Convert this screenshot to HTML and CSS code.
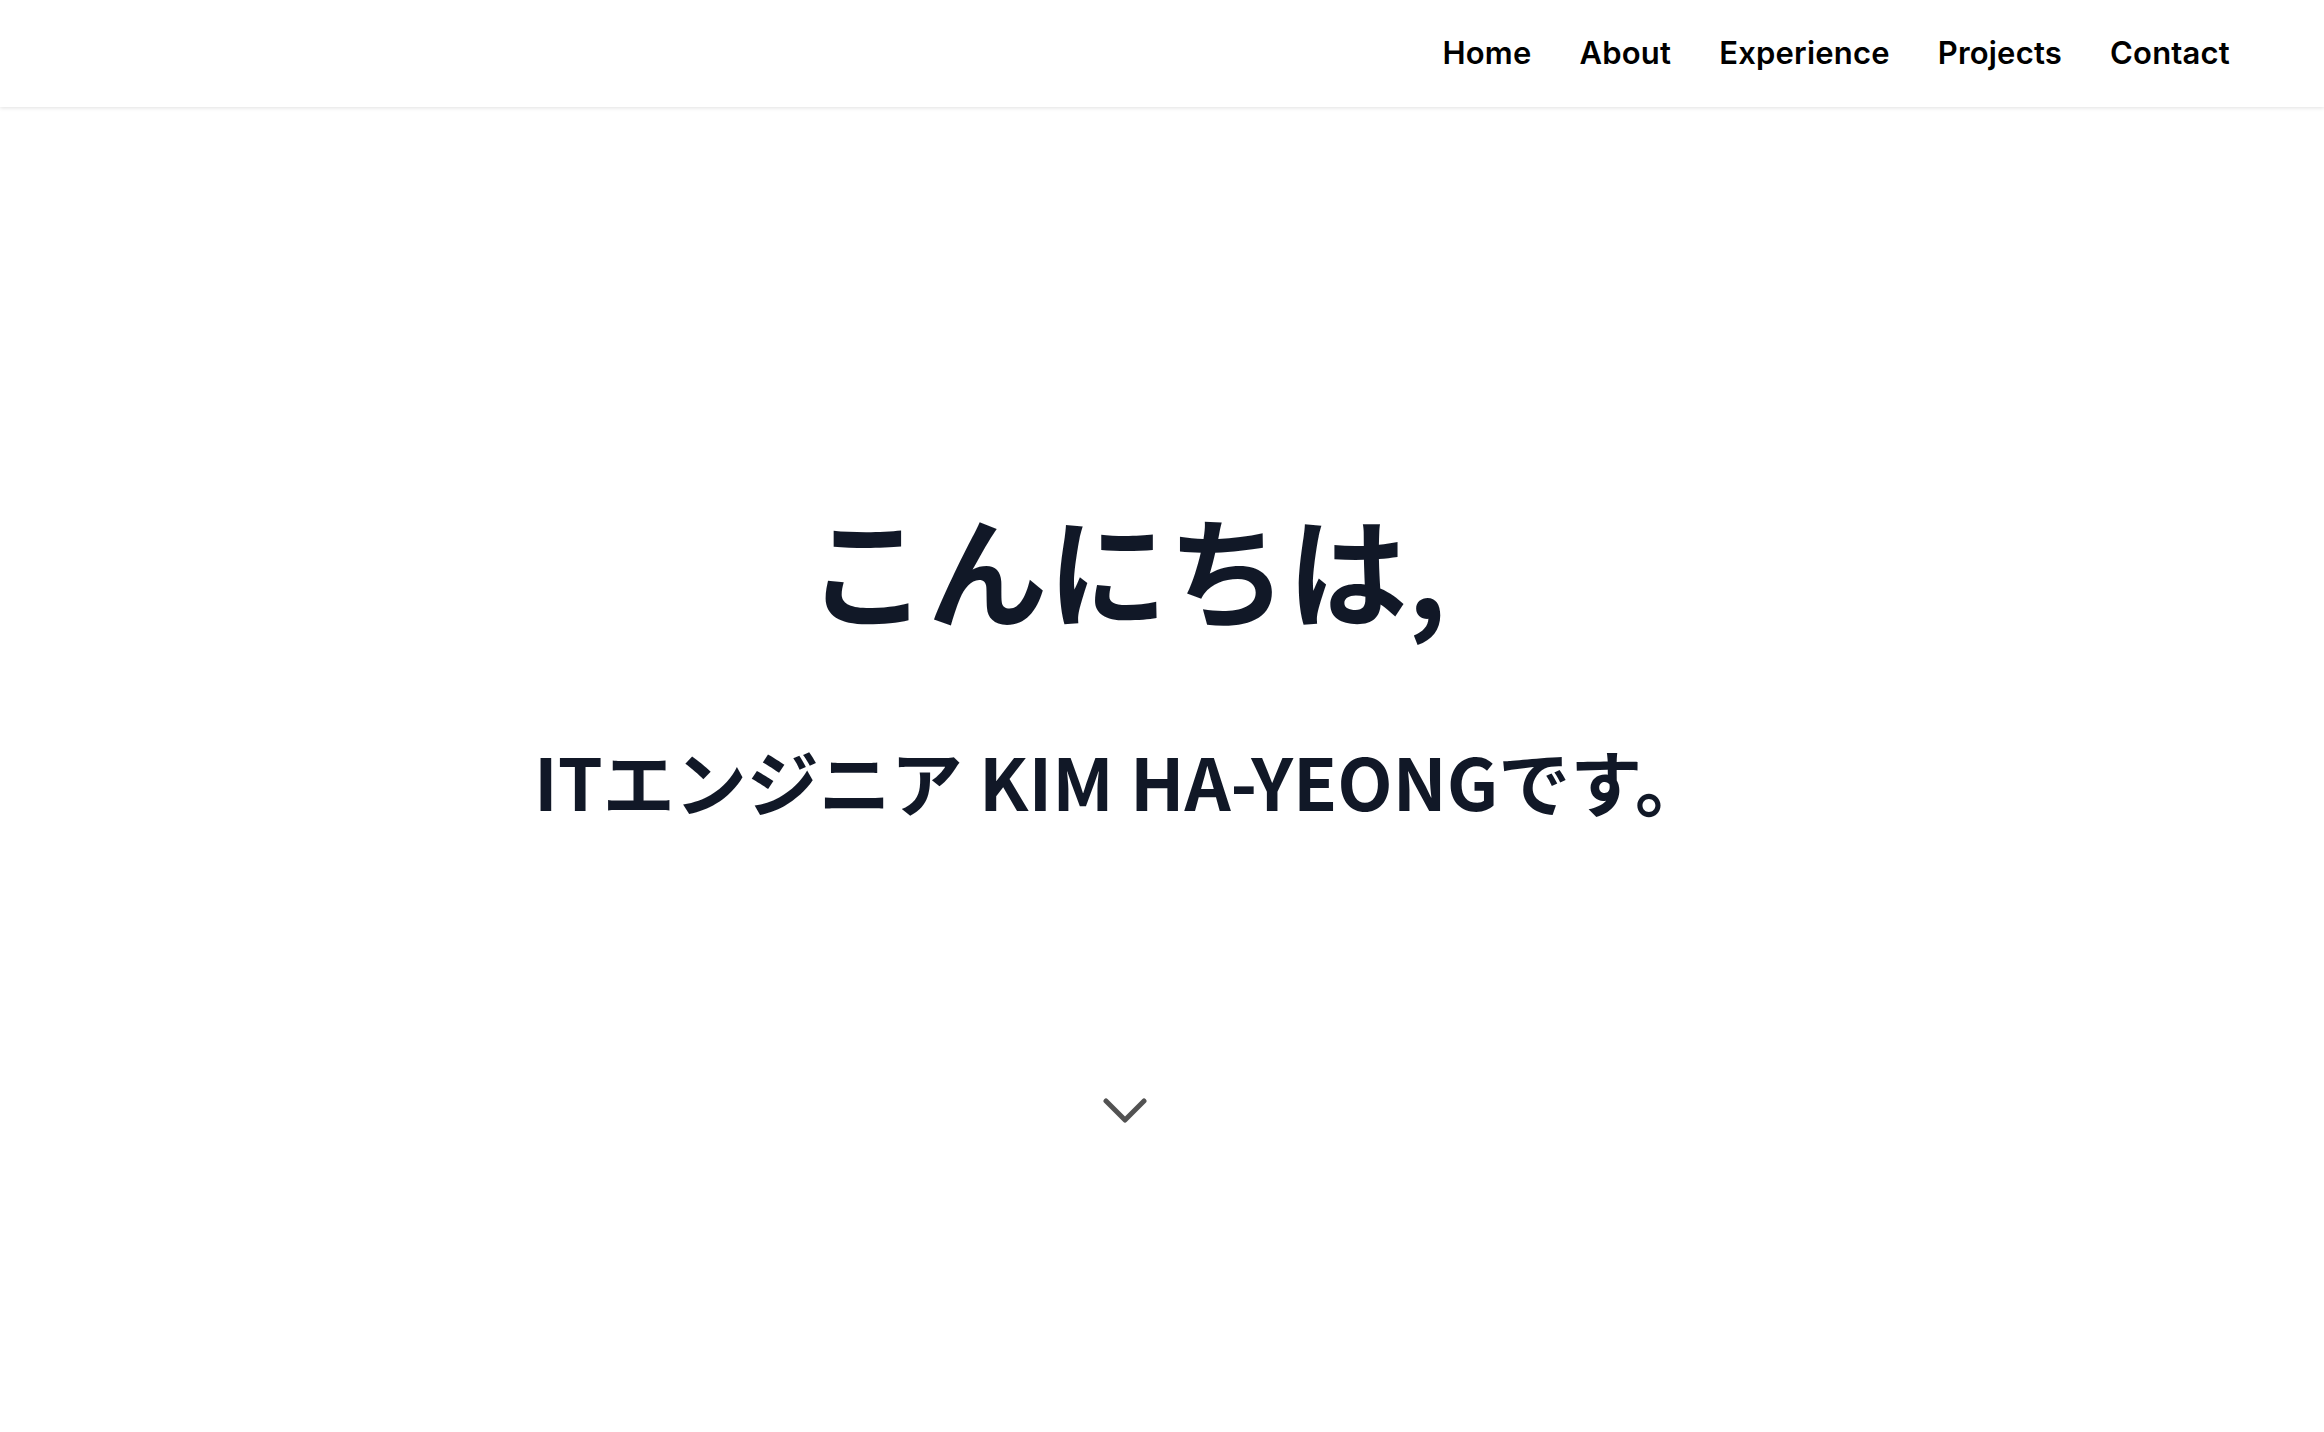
FILE: index.html
```html
<!DOCTYPE html>
<html lang="ja">
<head>
<meta charset="utf-8">
<title>KIM HA-YEONG</title>
<link rel="stylesheet" href="styles.css">
</head>
<body>
<header class="nav">
  <nav class="nav-links">
    <a href="#home">Home</a>
    <a href="#about">About</a>
    <a href="#experience">Experience</a>
    <a href="#projects">Projects</a>
    <a href="#contact">Contact</a>
  </nav>
</header>
<main class="hero" id="home">
  <h1 class="hero-title">こんにちは,</h1>
  <p class="hero-sub">ITエンジニア KIM HA-YEONGです。</p>
  <a class="scroll-down" href="#about" aria-label="scroll down">
    <svg width="44" height="26" viewBox="0 0 44 26"><polyline points="3,3 22,22 41,3" fill="none" stroke="currentColor" stroke-width="5" stroke-linecap="round" stroke-linejoin="round"/></svg>
  </a>
</main>
</body>
</html>
```
FILE: styles.css
```css
html, body {
  margin: 0;
  padding: 0;
  background: #ffffff;
}
body {
  font-family: "Noto Sans CJK JP", "Noto Sans", sans-serif;
  color: #111827;
}
.nav {
  height: 107px;
  display: flex;
  justify-content: flex-end;
  align-items: center;
  padding-right: 94px;
  padding-bottom: 2px;
  box-sizing: border-box;
  background: #fff;
  box-shadow: 0 1px 4px rgba(0, 0, 0, 0.12);
  position: relative;
  z-index: 2;
}
.nav-links {
  display: flex;
  gap: 48px;
}
.nav-links a {
  font-family: Inter, "Liberation Sans", sans-serif;
  font-weight: 600;
  font-size: 31px;
  letter-spacing: 0.2px;
  color: #000;
  text-decoration: none;
}
.hero {
  display: flex;
  flex-direction: column;
  align-items: center;
  padding-top: 388px;
  padding-right: 70px;
  padding-bottom: 200px;
}
.hero-title {
  margin: 0;
  font-size: 120px;
  line-height: 1.2;
  font-weight: 700;
}
.hero-sub {
  margin: 98px 0 0;
  padding-right: 13px;
  font-size: 72px;
  line-height: 1.2;
  font-weight: 700;
}
.scroll-down {
  margin-top: 275px;
  margin-right: 4px;
  color: #525252;
  display: block;
  line-height: 0;
}
```
